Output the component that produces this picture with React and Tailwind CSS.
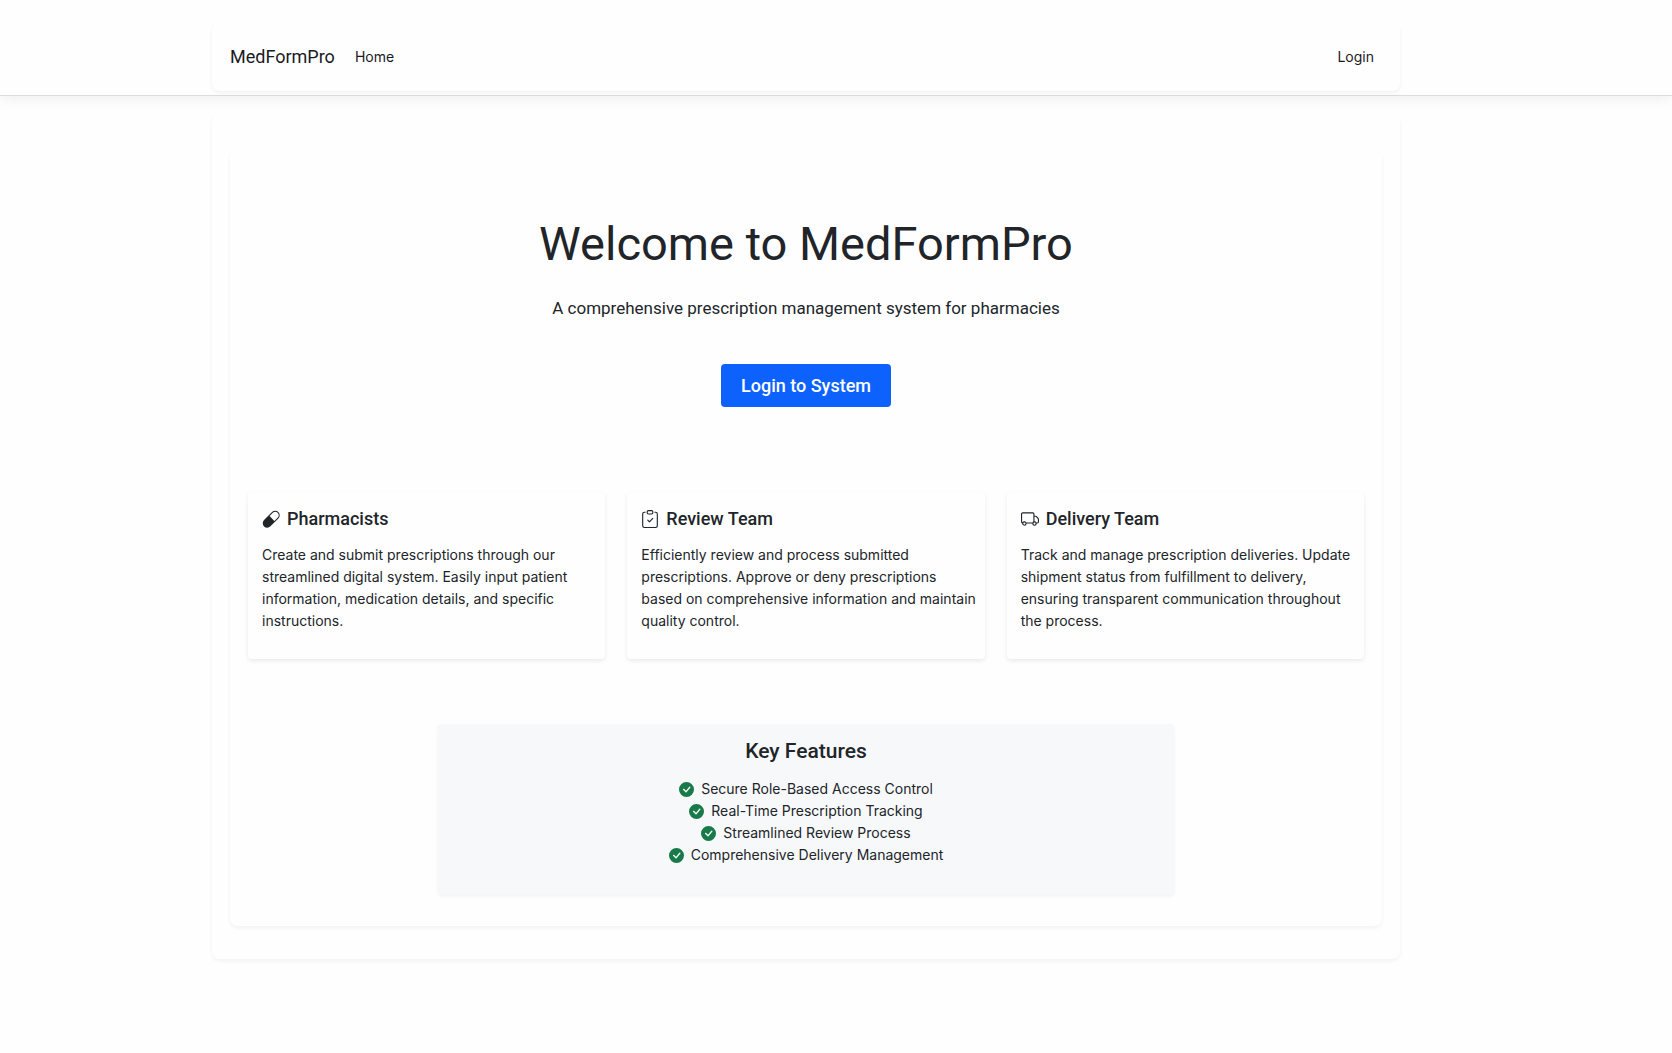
import React from "react";
import { BsCapsule, BsClipboardCheck, BsTruck, BsCheckCircleFill } from "react-icons/bs";

const roles = [
  {
    icon: BsCapsule,
    title: "Pharmacists",
    text: "Create and submit prescriptions through our streamlined digital system. Easily input patient information, medication details, and specific instructions.",
  },
  {
    icon: BsClipboardCheck,
    title: "Review Team",
    text: "Efficiently review and process submitted prescriptions. Approve or deny prescriptions based on comprehensive information and maintain quality control.",
  },
  {
    icon: BsTruck,
    title: "Delivery Team",
    text: "Track and manage prescription deliveries. Update shipment status from fulfillment to delivery, ensuring transparent communication throughout the process.",
  },
];

const features = [
  "Secure Role-Based Access Control",
  "Real-Time Prescription Tracking",
  "Streamlined Review Process",
  "Comprehensive Delivery Management",
];

export default function App() {
  return (
    <div className="min-h-screen bg-[#fefefe] font-['Inter',sans-serif] text-sm text-[#212529]">
      <header className="border-b border-[#dcdcdc] pt-[22px] pr-[60px] pb-1 shadow-[0_2px_14px_rgba(0,0,0,0.07)]">
        <nav className="mx-auto flex max-w-[1188px] items-center rounded-lg px-[18px] py-5 text-[#1a1a1e] shadow-[0_2px_4px_rgba(0,0,0,0.05)]">
          <a href="#" className="mr-5 font-['Roboto',sans-serif] text-lg leading-[29px]">MedFormPro</a>
          <a href="#home">Home</a>
          <a href="#login" className="mr-2 ml-auto">Login</a>
        </nav>
      </header>

      <div className="pt-[18px] pr-[60px]">
        <main className="mx-auto max-w-[1188px] rounded-lg px-[18px] pt-9 pb-[33px] shadow-[0_2px_4px_rgba(0,0,0,0.05)]">
          <div className="rounded-lg px-[18px] pt-[60px] pb-8 shadow-[0_2px_4px_rgba(0,0,0,0.05)]">
            <section className="flex flex-col items-center text-center font-['Roboto',sans-serif]">
              <h1 className="text-[47px] leading-[68px] font-normal">Welcome to MedFormPro</h1>
              <p className="mt-[15px] text-[17px] leading-[30px]">
                A comprehensive prescription management system for pharmacies
              </p>
              <button type="button" className="mt-[41px] rounded bg-[#0d62fe] px-5 py-2 text-lg leading-[27px] font-medium text-white">
                Login to System
              </button>
            </section>

            <section className="mt-[85px] grid grid-cols-3 gap-[22px]">
              {roles.map(({ icon: Icon, title, text }) => (
                <article key={title} className="rounded pt-4 pr-1.5 pb-[27px] pl-3.5 shadow-[0_2px_4px_rgba(0,0,0,0.08)]">
                  <h2 className="flex items-center gap-[7px] font-['Roboto',sans-serif] text-lg leading-[22px] font-medium">
                    <Icon className="size-[18px]" aria-hidden="true" />
                    {title}
                  </h2>
                  <p className="mt-3.5 leading-[22px]">{text}</p>
                </article>
              ))}
            </section>

            <section className="mx-auto mt-[65px] w-[66%] rounded bg-[#f7f8fa] px-3.5 pt-3.5 pb-7 text-center shadow-[0_2px_4px_rgba(0,0,0,0.05)]">
              <h2 className="font-['Roboto',sans-serif] text-[21px] leading-[26px] font-medium">Key Features</h2>
              <ul className="mt-3.5 leading-[22px]">
                {features.map((f) => (
                  <li key={f} className="flex items-center justify-center gap-[7px]">
                    <BsCheckCircleFill className="size-[15px] text-[#187a48]" aria-hidden="true" />
                    {f}
                  </li>
                ))}
              </ul>
            </section>
          </div>
        </main>
      </div>
    </div>
  );
}
